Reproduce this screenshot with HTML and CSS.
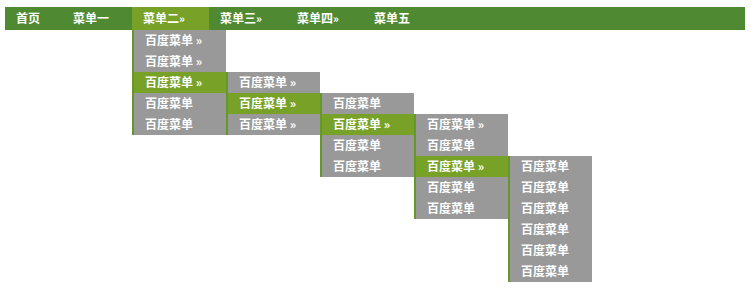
FILE: index.html
```html
<!DOCTYPE html>
<html lang="zh-CN">
<head>
    <meta charset="UTF-8">
    <title>多级菜单</title>
    <link rel="stylesheet" href="styles.css">
</head>
<body>

<div class="nav">
    <ul class="menu">
        <li class="item first"><a href="#">首页</a></li>
        <li class="item second"><a href="#">菜单一</a></li>
        <li class="item on"><a href="#">菜单二<span class="arr">»</span></a>
            <ul class="sub">
                <li><a href="#">百度菜单 »</a></li>
                <li><a href="#">百度菜单 »</a></li>
                <li class="on"><a href="#">百度菜单 »</a>
                    <ul class="sub">
                        <li><a href="#">百度菜单 »</a></li>
                        <li class="on"><a href="#">百度菜单 »</a>
                            <ul class="sub">
                                <li><a href="#">百度菜单</a></li>
                                <li class="on"><a href="#">百度菜单 »</a>
                                    <ul class="sub">
                                        <li><a href="#">百度菜单 »</a></li>
                                        <li><a href="#">百度菜单</a></li>
                                        <li class="on"><a href="#">百度菜单 »</a>
                                            <ul class="sub narrow">
                                                <li><a href="#">百度菜单</a></li>
                                                <li><a href="#">百度菜单</a></li>
                                                <li><a href="#">百度菜单</a></li>
                                                <li><a href="#">百度菜单</a></li>
                                                <li><a href="#">百度菜单</a></li>
                                                <li><a href="#">百度菜单</a></li>
                                            </ul>
                                        </li>
                                        <li><a href="#">百度菜单</a></li>
                                        <li><a href="#">百度菜单</a></li>
                                    </ul>
                                </li>
                                <li><a href="#">百度菜单</a></li>
                                <li><a href="#">百度菜单</a></li>
                            </ul>
                        </li>
                        <li><a href="#">百度菜单 »</a></li>
                    </ul>
                </li>
                <li><a href="#">百度菜单</a></li>
                <li><a href="#">百度菜单</a></li>
            </ul>
        </li>
        <li class="item"><a href="#">菜单三<span class="arr">»</span></a></li>
        <li class="item"><a href="#">菜单四<span class="arr">»</span></a></li>
        <li class="item"><a href="#">菜单五</a></li>
    </ul>
</div>

</body>
</html>
```

FILE: styles.css
```css
html {
    height: 100%;
}

body {
    box-sizing: border-box;
    min-height: 100%;
    margin: 0;
    padding: 7px 6px 0 5px;
    font-family: "Noto Sans CJK SC", "Liberation Sans", sans-serif;
    font-size: 12px;
    font-weight: bold;
    background-color: #fff;
}

ul {
    list-style: none;
    margin: 0;
    padding: 0;
}

a {
    display: block;
    color: #fff;
    text-decoration: none;
    white-space: nowrap;
}

.nav {
    height: 23px;
    background-color: #4f8a33;
}

.menu {
    display: flex;
    height: 23px;
}

.menu .item {
    position: relative;
    width: 77px;
}

.menu .item.first {
    width: 57px;
}

.menu .item.second {
    width: 70px;
}

.menu .item > a {
    line-height: 21px;
    padding: 0 0 2px 11px;
}

.menu .item.on > a {
    background-color: #78a127;
}

.arr {
    font-size: 11px;
}

/* dropdown levels */
.sub {
    position: absolute;
    z-index: 10;
    left: 100%;
    top: 0;
    width: 92px;
    border-left: 2px solid #64992a;
    background-color: #999;
}

.menu .item > .sub {
    left: 0;
    top: 100%;
}

.sub.narrow {
    width: 82px;
}

.sub li {
    position: relative;
}

.sub a {
    line-height: 19px;
    padding: 0 0 2px 11px;
}

.sub li.on > a {
    background-color: #78a127;
}
```
